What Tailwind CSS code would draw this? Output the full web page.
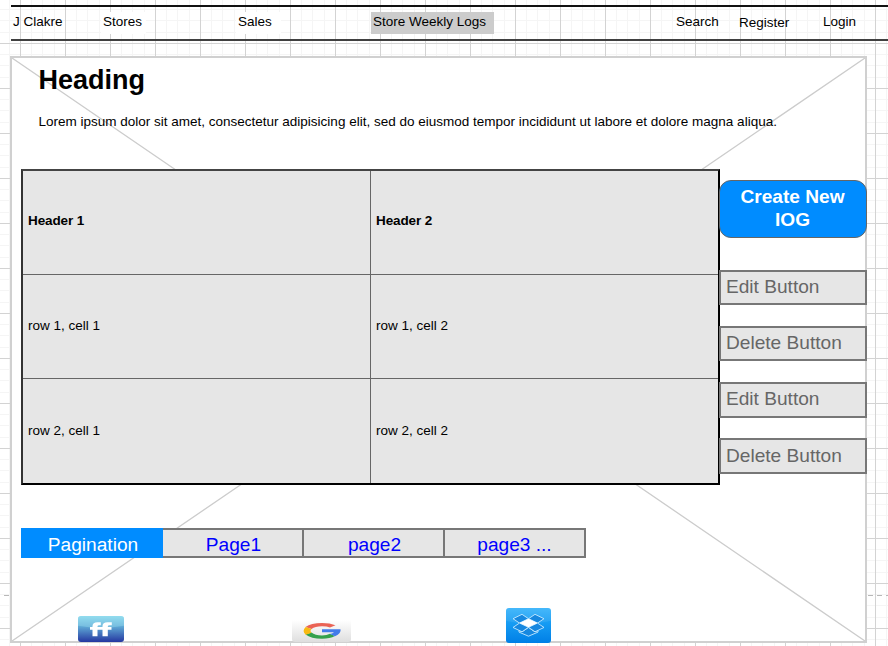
<!DOCTYPE html>
<html lang="en">
<head>
<meta charset="utf-8">
<title>Store Weekly Logs</title>
<script src="https://cdn.jsdelivr.net/npm/@tailwindcss/browser@4"></script>
</head>
<body class="relative isolate h-[646px] w-[888px] overflow-hidden bg-white font-['Liberation_Sans',Arial,sans-serif] text-[13.5px] leading-[16px] text-black">
<!-- canvas grid -->
<svg class="absolute inset-0 -z-10" width="888" height="646">
  <defs>
    <pattern id="grid" x="20" y="43" width="45" height="45" patternUnits="userSpaceOnUse">
      <path d="M11.5 0V45M22.5 0V45M34.5 0V45M0 11.5H45M0 22.5H45M0 34.5H45" stroke="#f5f5f5" stroke-width="1"/>
      <path d="M.5 0V45M0 .5H45" stroke="#d3d3d3" stroke-width="1"/>
    </pattern>
  </defs>
  <rect width="888" height="646" fill="url(#grid)"/>
  <path d="M4 595.5H888" stroke="#b8b8b8" stroke-dasharray="5 4"/>
</svg>

<div class="flex h-full flex-col pt-[5px] pl-[11px]">
  <nav class="flex h-9 w-[877px] shrink-0 border-t-2 border-b-2 border-t-[#111] border-b-[#404040] pt-[5px]">
    <a class="ml-px h-[22px] w-[54px] pt-[2px] pl-px whitespace-nowrap">J Clakre</a>
    <a class="ml-[35px] h-[22px] w-[45px] bg-white pt-[2px] pl-[2px]">Stores</a>
    <a class="ml-[90px] h-[22px] w-[45px] bg-white pt-[2px] pl-[2px]">Sales</a>
    <a class="ml-[90px] h-[22px] w-[123px] bg-[#ccc] pt-[2px] pl-[2px]">Store Weekly Logs</a>
    <a class="ml-[180px] h-[22px] w-[47px] pt-[2px] pl-[2px]">Search</a>
    <a class="ml-[16px] h-[22px] w-[54px] pt-[3px] pl-[2px]">Register</a>
    <a class="ml-[29px] h-[22px] w-[38px] pt-[2px] pl-[3px]">Login</a>
  </nav>

  <main class="relative -ml-px mt-[15px] h-[587px] w-[857px] shrink-0 border-2 border-[#d0d0d0] bg-white">
    <svg class="absolute inset-0" width="853" height="583"><path d="M0 0L853 583M853 0L0 583" stroke="#ccc" stroke-width="1.3"/></svg>
    <div class="relative flex h-full flex-col">
      <header class="h-[111px] shrink-0 pt-[6px] pl-[26.5px]">
        <h1 class="text-[27px] leading-[32px] font-bold">Heading</h1>
        <p class="mt-[18px] whitespace-nowrap">Lorem ipsum dolor sit amet, consectetur adipisicing elit, sed do eiusmod tempor incididunt ut labore et dolore magna aliqua.</p>
      </header>

      <section class="ml-[9px] flex h-[316px] shrink-0">
        <div class="grid w-[699px] shrink-0 grid-cols-[348px_1fr] grid-rows-[104px_104px_1fr] border-2 border-t-[#444] border-r-black border-b-black border-l-[#333] bg-[#e6e6e6]">
          <div class="flex items-center border-r border-b border-[#666] pb-[4px] pl-[5px] font-bold tracking-[-0.1px]">Header 1</div>
          <div class="flex items-center border-b border-[#666] pb-[4px] pl-[5px] font-bold tracking-[-0.1px]">Header 2</div>
          <div class="flex items-center border-r border-b border-[#666] pb-[2px] pl-[5px]">row 1, cell 1</div>
          <div class="flex items-center border-b border-[#666] pb-[2px] pl-[5px]">row 1, cell 2</div>
          <div class="flex items-center border-r border-[#666] pl-[5px]">row 2, cell 1</div>
          <div class="flex items-center pl-[5px]">row 2, cell 2</div>
        </div>
        <div class="-ml-[1px] flex w-[148px] shrink-0 flex-col pt-[11px] text-[19.125px]">
          <button class="h-[58px] w-full shrink-0 rounded-[12px] border-[1.5px] border-[#666] bg-[#008cff] pr-[14px] pb-[2px] pl-[13px] leading-[23px] font-bold text-white">Create New IOG</button>
          <button class="mt-[32px] h-[35px] shrink-0 border-2 border-[#777] bg-[#e6e6e6] pb-[1px] pl-[5px] text-left leading-[22px] text-[#666]">Edit Button</button>
          <button class="mt-[21px] h-[35px] shrink-0 border-2 border-[#777] bg-[#e6e6e6] pb-[1px] pl-[5px] text-left leading-[22px] text-[#666]">Delete Button</button>
          <button class="mt-[21px] h-[36px] shrink-0 border-2 border-[#777] bg-[#e6e6e6] pb-[2px] pl-[5px] text-left leading-[22px] text-[#666]">Edit Button</button>
          <button class="mt-[20px] h-[36px] shrink-0 border-2 border-[#777] bg-[#e6e6e6] pb-[1px] pl-[5px] text-left leading-[22px] text-[#666]">Delete Button</button>
        </div>
      </section>

      <div class="mt-[43px] ml-[9px] flex h-[30px] w-[565px] shrink-0 text-center text-[19.125px] leading-[29px] text-[#0000ff]">
        <a class="w-[142px] bg-[#008cff] pt-[2px] pl-[2px] text-white">Pagination</a>
        <a class="w-[141px] border-y-2 border-r-2 border-[#777] bg-[#e6e6e6] pl-[2px]">Page1</a>
        <a class="w-[141px] border-y-2 border-r-2 border-[#777] bg-[#e6e6e6] pl-[2px]">page2</a>
        <a class="w-[141px] border-y-2 border-r-2 border-[#777] bg-[#e6e6e6]">page3 ...</a>
      </div>

      <footer class="mt-[50px] ml-[66px] flex h-[35px] shrink-0 items-end">
        <svg class="mb-[1px]" width="46" height="26" viewBox="0 0 46 27" preserveAspectRatio="none">
          <defs>
            <linearGradient id="ff" x2="0" y2="1"><stop stop-color="#87d8ec"/><stop offset=".4" stop-color="#5fa9d6"/><stop offset="1" stop-color="#2537a0"/></linearGradient>
          </defs>
          <rect width="46" height="27" rx="3" fill="url(#ff)"/>
          <path d="M0 3Q0 0 3 0H43Q46 0 46 3V10Q23 14 0 10Z" fill="#a5e6f3" opacity=".35"/>
          <path d="M14.500 21V14.200H12V11.500H14.500V10.500Q14.500 6.500 19.500 6.500H22.800V9.500H21Q19.500 9.500 19.500 11V11.500H24.500V10.500Q24.500 6.500 29.500 6.500H33.800V9.500H31.500Q29.800 9.500 29.800 11V11.500H33.500V14.200H29.800V21H24.500V14.200H19.500V21Z" fill="#fff"/>
        </svg>
        <svg class="mb-[1px] ml-[168px]" width="59" height="22" viewBox="0 0 59 22">
          <defs><linearGradient id="gg" x2="0" y2="1"><stop stop-color="#fff"/><stop offset="1" stop-color="#dedede"/></linearGradient></defs>
          <path d="M0 0H59V19Q59 22 56 22H3Q0 22 0 19Z" fill="url(#gg)"/>
          <path d="M13.500 7Q19 3 30 3Q38 3 43.500 5.200L38 7.500Q35 6.200 30 6.200Q23 6.200 19.500 9Z" fill="#ea6355"/>
          <path d="M13.500 14.500L19.500 12.500Q23 15.500 30 15.500Q35 15.500 38 13.800L43 16Q38 18.700 30 18.700Q19 18.700 13.500 14.500Z" fill="#34a14c"/>
          <path d="M13.700 7L19.500 9Q17.500 10.800 19.500 12.700L13.700 14.700Q9.500 11 13.700 7Z" fill="#f8b912"/>
          <path d="M30 9.300H48.500Q49.500 13.500 43 16.200L38 14Q41 13.300 42 12.300H30Z" fill="#427bea"/>
        </svg>
        <svg class="ml-[155px]" width="45" height="35" viewBox="0 0 45 36" preserveAspectRatio="none">
          <defs><linearGradient id="db" x2="0" y2="1"><stop stop-color="#35b2fb"/><stop offset=".45" stop-color="#159bf3"/><stop offset="1" stop-color="#007fe6"/></linearGradient></defs>
          <rect width="45" height="36" rx="3" fill="url(#db)"/>
          <path d="M0 3Q0 0 3 0H42Q45 0 45 3V13Q22 19 0 13Z" fill="#fff" opacity=".08"/>
          <g fill="#1788e0" stroke="#c9ebff" stroke-width=".9" stroke-linejoin="round">
            <path d="M16 6.500L22.500 11L13.500 15.500L7 11Z"/><path d="M29 6.500L22.500 11L31.500 15.500L38 11Z"/>
            <path d="M13 23V24.800L22.500 29L32 24.800V23L29 24.500L22.500 20L16 24.500Z"/>
            <path d="M13.500 15.500L22.500 19.800L16 24.500L7 20Z"/><path d="M31.500 15.500L22.500 19.800L29 24.500L38 20Z"/>
          </g>
          <path d="M22.500 11L31.500 15.500L22.500 19.800L13.500 15.500Z" fill="#fff"/>
        </svg>
      </footer>
    </div>
  </main>
</div>
</body>
</html>
